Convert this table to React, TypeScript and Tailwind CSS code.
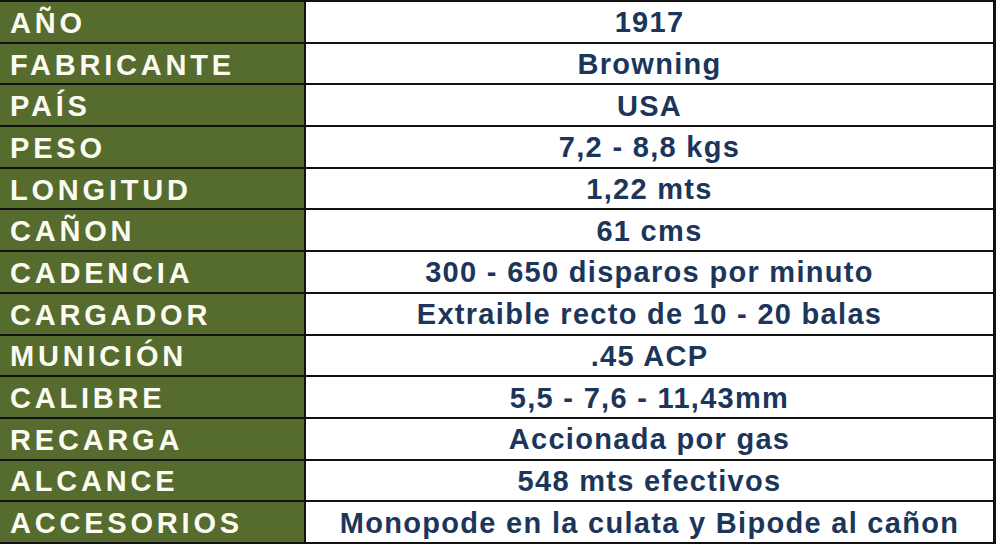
import React from "react";

const rows: [string, string][] = [
  ["AÑO", "1917"],
  ["FABRICANTE", "Browning"],
  ["PAÍS", "USA"],
  ["PESO", "7,2 - 8,8 kgs"],
  ["LONGITUD", "1,22 mts"],
  ["CAÑON", "61 cms"],
  ["CADENCIA", "300 - 650 disparos por minuto"],
  ["CARGADOR", "Extraible recto de 10 - 20 balas"],
  ["MUNICIÓN", ".45 ACP"],
  ["CALIBRE", "5,5 - 7,6 - 11,43mm"],
  ["RECARGA", "Accionada por gas"],
  ["ALCANCE", "548 mts efectivos"],
  ["ACCESORIOS", "Monopode en la culata y Bipode al cañon"],
];

export default function App() {
  return (
    <div
      className="w-[996px] h-[544px] bg-[#111111] pt-[2px] pb-[2px] pr-[3px] grid grid-cols-[304px_1fr] grid-rows-[repeat(13,minmax(0,1fr))] gap-[2px] overflow-hidden"
      style={{ fontFamily: '"Liberation Sans", Arial, sans-serif' }}
    >
      {rows.map(([label, value]) => (
        <React.Fragment key={label}>
          <div className="bg-[#566b2e] flex items-center pl-[10px] pt-[3px] text-[29px] font-bold tracking-[3.8px] text-[#fbfbf2] leading-none whitespace-nowrap">
            {label}
          </div>
          <div className="bg-white flex items-center justify-center pt-[2px] text-[29px] font-bold tracking-[1.3px] text-[#1b365a] leading-none whitespace-nowrap">
            {value}
          </div>
        </React.Fragment>
      ))}
    </div>
  );
}
